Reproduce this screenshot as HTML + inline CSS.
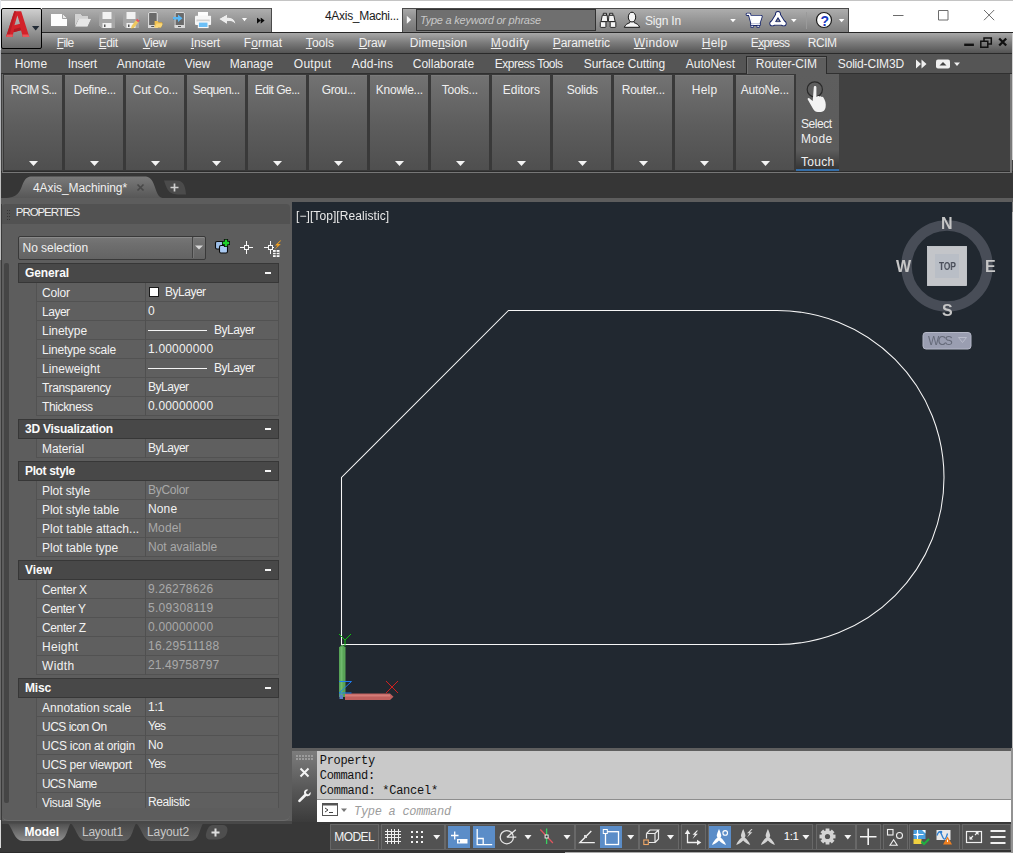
<!DOCTYPE html>
<html lang="en"><head><meta charset="utf-8"><title>4Axis_Machining - AutoCAD</title>
<style>
html,body{margin:0;padding:0}
body{width:1013px;height:853px;position:relative;overflow:hidden;background:#3a3a3a;font-family:'Liberation Sans',sans-serif;font-size:12px;color:#f0f0f0}
.b{position:absolute;box-sizing:border-box}
.t{position:absolute;white-space:pre}
svg{position:absolute;overflow:visible}
u{text-decoration:underline;text-underline-offset:1px}
</style></head><body>
<div class="b" style="left:0px;top:0px;width:1013px;height:33px;background:#ffffff;border-top:1px solid #c4c4c4;"></div>
<div class="b" style="left:42px;top:8px;width:230px;height:24px;background:linear-gradient(#aeaeae,#989898 45%,#7e7e7e);border-top:1px solid #555;border-right:1px solid #4a4a4a;"></div>
<div class="b" style="left:402px;top:8px;width:447px;height:24px;background:linear-gradient(#adadad,#979797 45%,#7e7e7e);border:1px solid #4a4a4a;border-bottom:none;"></div>
<div class="b" style="left:416px;top:9px;width:180px;height:22px;background:#6f6f6f;border:1px solid #323232;"></div>
<div class="b" style="left:403px;top:9px;width:13px;height:22px;background:linear-gradient(#a8a8a8,#8a8a8a 50%,#767676);"></div>
<span class="t" style="left:325.0px;top:8.84px;font-size:12px;line-height:14px;color:#1a1a1a;letter-spacing:-0.302px;">4Axis_Machi...</span>
<span class="t" style="left:420.0px;top:13.69px;font-size:11px;line-height:13px;color:#c8c8c8;letter-spacing:-0.229px;font-style:italic;">Type a keyword or phrase</span>
<span class="t" style="left:645.0px;top:13.84px;font-size:12px;line-height:14px;color:#f0f0f0;letter-spacing:-0.21px;">Sign In</span>
<svg style="left:880px;top:0;width:133px;height:33px" viewBox="0 0 133 33"><path d="M13 15.5h10.5M58.5 10.5h9.5v9.5h-9.5zM104 10l10.2 10.2M114.2 10l-10.2 10.2" fill="none" stroke="#6c6c6c" stroke-width="1"/></svg>
<div class="b" style="left:0px;top:32px;width:1013px;height:22px;background:linear-gradient(#a8a8a8,#7c7c7c 48%,#545454);border-top:1px solid #262626;border-bottom:1px solid #2a2a2a;"></div>
<span class="t" style="left:56.8px;top:35.84px;font-size:12px;line-height:14px;color:#f0f0f0;letter-spacing:-0.686px;"><u>F</u>ile</span>
<span class="t" style="left:98.8px;top:35.84px;font-size:12px;line-height:14px;color:#f0f0f0;letter-spacing:-0.468px;"><u>E</u>dit</span>
<span class="t" style="left:142.8px;top:35.84px;font-size:12px;line-height:14px;color:#f0f0f0;letter-spacing:-0.504px;"><u>V</u>iew</span>
<span class="t" style="left:190.8px;top:35.84px;font-size:12px;line-height:14px;color:#f0f0f0;letter-spacing:-0.146px;"><u>I</u>nsert</span>
<span class="t" style="left:243.8px;top:35.84px;font-size:12px;line-height:14px;color:#f0f0f0;letter-spacing:0.054px;">F<u>o</u>rmat</span>
<span class="t" style="left:305.8px;top:35.84px;font-size:12px;line-height:14px;color:#f0f0f0;letter-spacing:0.071px;"><u>T</u>ools</span>
<span class="t" style="left:358.8px;top:35.84px;font-size:12px;line-height:14px;color:#f0f0f0;letter-spacing:-0.239px;"><u>D</u>raw</span>
<span class="t" style="left:409.8px;top:35.84px;font-size:12px;line-height:14px;color:#f0f0f0;letter-spacing:0.073px;">Dime<u>n</u>sion</span>
<span class="t" style="left:490.8px;top:35.84px;font-size:12px;line-height:14px;color:#f0f0f0;letter-spacing:0.588px;"><u>M</u>odify</span>
<span class="t" style="left:552.8px;top:35.84px;font-size:12px;line-height:14px;color:#f0f0f0;letter-spacing:-0.081px;"><u>P</u>arametric</span>
<span class="t" style="left:633.8px;top:35.84px;font-size:12px;line-height:14px;color:#f0f0f0;letter-spacing:0.323px;"><u>W</u>indow</span>
<span class="t" style="left:701.8px;top:35.84px;font-size:12px;line-height:14px;color:#f0f0f0;letter-spacing:0.204px;"><u>H</u>elp</span>
<span class="t" style="left:750.8px;top:35.84px;font-size:12px;line-height:14px;color:#f0f0f0;letter-spacing:-0.677px;">E<u>x</u>press</span>
<span class="t" style="left:807.8px;top:35.84px;font-size:12px;line-height:14px;color:#f0f0f0;letter-spacing:-0.457px;">RCIM</span>
<svg style="left:960px;top:33px;width:50px;height:20px" viewBox="960 33 50 20"><path d="M964.200 44.800h9.700" stroke="#111" stroke-width="2.400" fill="none"/><path d="M980.800 41.200h7v6h-7zM984 41v-3h7.300v6h-3.300" stroke="#111" stroke-width="1.500" fill="none"/><path d="M999.200 38.500l7 7M1006.200 38.500l-7 7" stroke="#111" stroke-width="2.300" fill="none"/></svg>
<div class="b" style="left:1px;top:8px;width:41px;height:41px;background:linear-gradient(#cfcfcf,#a0a0a0 45%,#6b6b6b);border:1px solid #000;border-radius:2px;"></div>
<svg style="left:1px;top:8px;width:41px;height:41px" viewBox="0 0 41 41"><path d="M5 29 L13.300 3.300 L20.200 3.300 L28.300 29 L21.800 29 L20 22.300 L12.500 24.200 L11.500 29 Z M13.400 17.200 L19 15.800 L16.400 7.500 Z" fill="#d3222a" fill-rule="evenodd"/><path d="M5 29 L13.300 3.300 L15 3.300 L8 29Z" fill="#b81c24"/><path d="M20 22.300 L12.500 24.200 L13.200 21 L19.300 19.500Z" fill="#b01a22"/><path d="M21.800 29 L28.300 29 L27.500 26.500 L21.200 26.500Z" fill="#e8565a"/><path d="M5 29 L11.500 29 L12 26.500 L5.800 26.500Z" fill="#e8565a"/><path d="M31 18h7.400l-3.700 4.600z" fill="#222b36"/></svg>
<div class="b" style="left:0px;top:54px;width:1013px;height:20px;background:#555555;border-bottom:1px solid #303030;"></div>
<div class="b" style="left:746px;top:56px;width:80.5px;height:18.5px;background:#5e5e5e;border:1px solid #2c2c2c;border-bottom:none;box-shadow:inset 1px 1px 0 #727272;"></div>
<span class="t" style="left:14.8px;top:56.84px;font-size:12px;line-height:14px;color:#f0f0f0;letter-spacing:0.095px;">Home</span>
<span class="t" style="left:67.8px;top:56.84px;font-size:12px;line-height:14px;color:#f0f0f0;letter-spacing:-0.143px;">Insert</span>
<span class="t" style="left:116.8px;top:56.84px;font-size:12px;line-height:14px;color:#f0f0f0;letter-spacing:0.036px;">Annotate</span>
<span class="t" style="left:184.8px;top:56.84px;font-size:12px;line-height:14px;color:#f0f0f0;letter-spacing:-0.166px;">View</span>
<span class="t" style="left:229.8px;top:56.84px;font-size:12px;line-height:14px;color:#f0f0f0;letter-spacing:-0.015px;">Manage</span>
<span class="t" style="left:293.8px;top:56.84px;font-size:12px;line-height:14px;color:#f0f0f0;letter-spacing:0.254px;">Output</span>
<span class="t" style="left:351.8px;top:56.84px;font-size:12px;line-height:14px;color:#f0f0f0;letter-spacing:0.102px;">Add-ins</span>
<span class="t" style="left:412.8px;top:56.84px;font-size:12px;line-height:14px;color:#f0f0f0;letter-spacing:-0.008px;">Collaborate</span>
<span class="t" style="left:494.8px;top:56.84px;font-size:12px;line-height:14px;color:#f0f0f0;letter-spacing:-0.515px;">Express Tools</span>
<span class="t" style="left:583.8px;top:56.84px;font-size:12px;line-height:14px;color:#f0f0f0;letter-spacing:-0.101px;">Surface Cutting</span>
<span class="t" style="left:685.8px;top:56.84px;font-size:12px;line-height:14px;color:#f0f0f0;letter-spacing:-0.008px;">AutoNest</span>
<span class="t" style="left:755.8px;top:56.84px;font-size:12px;line-height:14px;color:#f0f0f0;letter-spacing:-0.08px;">Router-CIM</span>
<span class="t" style="left:837.8px;top:56.84px;font-size:12px;line-height:14px;color:#f0f0f0;letter-spacing:-0.172px;">Solid-CIM3D</span>
<svg style="left:910px;top:54px;width:60px;height:20px" viewBox="0 0 60 20"><path d="M6 5.5l5 4.5-5 4.5zM11.5 5.5l5 4.5-5 4.5z" fill="#f0f0f0"/><rect x="26" y="5.5" width="14" height="9" rx="2" fill="#f0f0f0"/><path d="M29.5 11.5h7l-3.5-3.5z" fill="#444"/><path d="M44 8.5h6l-3 3.5z" fill="#f0f0f0"/></svg>
<div class="b" style="left:0px;top:74px;width:1013px;height:98px;background:#414141;border-bottom:1px solid #2c2c2c;"></div>
<div class="b" style="left:2px;top:74px;width:795px;height:97px;background:#393939;"></div>
<div class="b" style="left:1.5px;top:74px;width:1px;height:99px;background:#6a6a6a;"></div>
<div class="b" style="left:4px;top:74.5px;width:58.2px;height:95.3px;background:linear-gradient(#727272,#5e5e5e 50%,#4f4f4f);border-top:1px solid #7a7a7a;"></div>
<span class="t" style="left:10.8px;top:82.84px;font-size:12px;line-height:14px;color:#f0f0f0;letter-spacing:-0.714px;">RCIM S...</span>
<svg style="left:29px;top:161px;width:9px;height:5px" viewBox="0 0 9 5"><path d="M0 0h9l-4.5 5z" fill="#f4f4f4"/></svg>
<div class="b" style="left:65px;top:74.5px;width:58.2px;height:95.3px;background:linear-gradient(#727272,#5e5e5e 50%,#4f4f4f);border-top:1px solid #7a7a7a;"></div>
<span class="t" style="left:73.8px;top:82.84px;font-size:12px;line-height:14px;color:#f0f0f0;letter-spacing:-0.3px;">Define...</span>
<svg style="left:90px;top:161px;width:9px;height:5px" viewBox="0 0 9 5"><path d="M0 0h9l-4.5 5z" fill="#f4f4f4"/></svg>
<div class="b" style="left:126px;top:74.5px;width:58.2px;height:95.3px;background:linear-gradient(#727272,#5e5e5e 50%,#4f4f4f);border-top:1px solid #7a7a7a;"></div>
<span class="t" style="left:132.8px;top:82.84px;font-size:12px;line-height:14px;color:#f0f0f0;letter-spacing:-0.257px;">Cut Co...</span>
<svg style="left:151px;top:161px;width:9px;height:5px" viewBox="0 0 9 5"><path d="M0 0h9l-4.5 5z" fill="#f4f4f4"/></svg>
<div class="b" style="left:187px;top:74.5px;width:58.2px;height:95.3px;background:linear-gradient(#727272,#5e5e5e 50%,#4f4f4f);border-top:1px solid #7a7a7a;"></div>
<span class="t" style="left:192.8px;top:82.84px;font-size:12px;line-height:14px;color:#f0f0f0;letter-spacing:-0.509px;">Sequen...</span>
<svg style="left:212px;top:161px;width:9px;height:5px" viewBox="0 0 9 5"><path d="M0 0h9l-4.5 5z" fill="#f4f4f4"/></svg>
<div class="b" style="left:248px;top:74.5px;width:58.2px;height:95.3px;background:linear-gradient(#727272,#5e5e5e 50%,#4f4f4f);border-top:1px solid #7a7a7a;"></div>
<span class="t" style="left:254.8px;top:82.84px;font-size:12px;line-height:14px;color:#f0f0f0;letter-spacing:-0.526px;">Edit Ge...</span>
<svg style="left:273px;top:161px;width:9px;height:5px" viewBox="0 0 9 5"><path d="M0 0h9l-4.5 5z" fill="#f4f4f4"/></svg>
<div class="b" style="left:309px;top:74.5px;width:58.2px;height:95.3px;background:linear-gradient(#727272,#5e5e5e 50%,#4f4f4f);border-top:1px solid #7a7a7a;"></div>
<span class="t" style="left:321.8px;top:82.84px;font-size:12px;line-height:14px;color:#f0f0f0;letter-spacing:-0.398px;">Grou...</span>
<svg style="left:334px;top:161px;width:9px;height:5px" viewBox="0 0 9 5"><path d="M0 0h9l-4.5 5z" fill="#f4f4f4"/></svg>
<div class="b" style="left:370px;top:74.5px;width:58.2px;height:95.3px;background:linear-gradient(#727272,#5e5e5e 50%,#4f4f4f);border-top:1px solid #7a7a7a;"></div>
<span class="t" style="left:375.8px;top:82.84px;font-size:12px;line-height:14px;color:#f0f0f0;letter-spacing:-0.257px;">Knowle...</span>
<svg style="left:395px;top:161px;width:9px;height:5px" viewBox="0 0 9 5"><path d="M0 0h9l-4.5 5z" fill="#f4f4f4"/></svg>
<div class="b" style="left:431px;top:74.5px;width:58.2px;height:95.3px;background:linear-gradient(#727272,#5e5e5e 50%,#4f4f4f);border-top:1px solid #7a7a7a;"></div>
<span class="t" style="left:441.8px;top:82.84px;font-size:12px;line-height:14px;color:#f0f0f0;letter-spacing:-0.245px;">Tools...</span>
<svg style="left:456px;top:161px;width:9px;height:5px" viewBox="0 0 9 5"><path d="M0 0h9l-4.5 5z" fill="#f4f4f4"/></svg>
<div class="b" style="left:492px;top:74.5px;width:58.2px;height:95.3px;background:linear-gradient(#727272,#5e5e5e 50%,#4f4f4f);border-top:1px solid #7a7a7a;"></div>
<span class="t" style="left:502.8px;top:82.84px;font-size:12px;line-height:14px;color:#f0f0f0;letter-spacing:-0.01px;">Editors</span>
<svg style="left:517px;top:161px;width:9px;height:5px" viewBox="0 0 9 5"><path d="M0 0h9l-4.5 5z" fill="#f4f4f4"/></svg>
<div class="b" style="left:553px;top:74.5px;width:58.2px;height:95.3px;background:linear-gradient(#727272,#5e5e5e 50%,#4f4f4f);border-top:1px solid #7a7a7a;"></div>
<span class="t" style="left:566.8px;top:82.84px;font-size:12px;line-height:14px;color:#f0f0f0;letter-spacing:-0.277px;">Solids</span>
<svg style="left:578px;top:161px;width:9px;height:5px" viewBox="0 0 9 5"><path d="M0 0h9l-4.5 5z" fill="#f4f4f4"/></svg>
<div class="b" style="left:614px;top:74.5px;width:58.2px;height:95.3px;background:linear-gradient(#727272,#5e5e5e 50%,#4f4f4f);border-top:1px solid #7a7a7a;"></div>
<span class="t" style="left:621.8px;top:82.84px;font-size:12px;line-height:14px;color:#f0f0f0;letter-spacing:-0.257px;">Router...</span>
<svg style="left:639px;top:161px;width:9px;height:5px" viewBox="0 0 9 5"><path d="M0 0h9l-4.5 5z" fill="#f4f4f4"/></svg>
<div class="b" style="left:675px;top:74.5px;width:58.2px;height:95.3px;background:linear-gradient(#727272,#5e5e5e 50%,#4f4f4f);border-top:1px solid #7a7a7a;"></div>
<span class="t" style="left:691.8px;top:82.84px;font-size:12px;line-height:14px;color:#f0f0f0;letter-spacing:0.204px;">Help</span>
<svg style="left:700px;top:161px;width:9px;height:5px" viewBox="0 0 9 5"><path d="M0 0h9l-4.5 5z" fill="#f4f4f4"/></svg>
<div class="b" style="left:736px;top:74.5px;width:58.2px;height:95.3px;background:linear-gradient(#727272,#5e5e5e 50%,#4f4f4f);border-top:1px solid #7a7a7a;"></div>
<span class="t" style="left:740.8px;top:82.84px;font-size:12px;line-height:14px;color:#f0f0f0;letter-spacing:-0.216px;">AutoNe...</span>
<svg style="left:761px;top:161px;width:9px;height:5px" viewBox="0 0 9 5"><path d="M0 0h9l-4.5 5z" fill="#f4f4f4"/></svg>
<div class="b" style="left:796.3px;top:74px;width:42.5px;height:96.5px;background:linear-gradient(#5e5e5e 0,#5c5c5c 80%,#363636 100%);border-bottom:2px solid #356ea8;"></div>
<span class="t" style="left:801.0px;top:116.84px;font-size:12px;line-height:14px;color:#f0f0f0;letter-spacing:-0.452px;">Select</span>
<span class="t" style="left:801.0px;top:131.84px;font-size:12px;line-height:14px;color:#f0f0f0;letter-spacing:0.356px;">Mode</span>
<span class="t" style="left:801.0px;top:154.84px;font-size:12px;line-height:14px;color:#f0f0f0;letter-spacing:0.267px;">Touch</span>
<svg style="left:800px;top:76px;width:36px;height:40px" viewBox="800 76 36 40"><circle cx="814.800" cy="89.400" r="7.600" fill="none" stroke="#2a2a2a" stroke-width="1.200"/><g transform="translate(803 81.200) scale(1.080)"><path d="M10 5.500c0-1.400 2.400-1.400 2.400 0v9l1.200-.6c.6-.5 1.400-.2 1.600.4.500-.6 1.600-.5 1.900.3.600-.5 1.600-.2 1.800.6 1.600 2.600 2.700 5.600 2 9.200-.500 2.400-2 4.100-4.200 4.100h-3c-2 0-3.200-1-4.300-2.800l-5-8.700c-.500-1 .4-1.800 1.400-1.300l3.200 2.600z" fill="#f2f2f2"/></g></svg>
<div class="b" style="left:1010px;top:74px;width:1.5px;height:99px;background:#7a7a7a;"></div>
<div class="b" style="left:1.5px;top:172px;width:1010px;height:1px;background:#777;"></div>
<div class="b" style="left:0px;top:173px;width:1013px;height:25px;background:#363636;"></div>
<div class="b" style="left:0px;top:198px;width:1013px;height:6px;background:#5d5d5d;"></div>
<svg style="left:0;top:173px;width:300px;height:30px" viewBox="0 0 300 30"><defs><linearGradient id="tg" x1="0" y1="0" x2="0" y2="1"><stop offset="0" stop-color="#7a7a7a"/><stop offset="1" stop-color="#565656"/></linearGradient></defs><path d="M0 25.500 C14 25.500 19 22 22 13 C25 5 27 3.500 33 3.500 L144 3.500 C150 3.500 152 6 154.500 13 C157.500 22 159 25.500 166 25.500 Z" fill="url(#tg)"/><path d="M164 7.500 L176 7.500 C182 7.500 185 10 186 21.500 L178 21.500 C170 21.500 167 18 164 7.500Z" fill="#4b4b4b"/><path d="M170.500 14.500h8M174.500 10.500v8" stroke="#d0d0d0" stroke-width="1.700"/><path d="M137.500 11.500l6 6M143.500 11.500l-6 6" stroke="#484848" stroke-width="1.700"/></svg>
<span class="t" style="left:33.0px;top:180.84px;font-size:12px;line-height:14px;color:#f0f0f0;letter-spacing:-0.086px;">4Axis_Machining*</span>
<div class="b" style="left:1.5px;top:198px;width:291px;height:623px;background:#5d5d5d;"></div>
<div class="b" style="left:2px;top:204px;width:288px;height:617px;background:#5d5d5d;border-radius:4px 4px 6px 6px;border-bottom:1px solid #6a6a6a;"></div>
<div class="b" style="left:2px;top:204px;width:288px;height:20px;background:#525252;border-radius:4px 4px 0 0;"></div>
<span class="t" style="left:15.8px;top:206.27px;font-size:11.5px;line-height:13.5px;color:#f0f0f0;letter-spacing:-1.069px;">PROPERTIES</span>
<svg style="left:0;top:200px;width:14px;height:24px" viewBox="0 200 14 24"><rect x="7" y="210" width="1" height="1" fill="#363636"/><rect x="7" y="213" width="1" height="1" fill="#363636"/><rect x="7" y="216" width="1" height="1" fill="#363636"/><rect x="7" y="219" width="1" height="1" fill="#363636"/><rect x="9" y="210" width="1" height="1" fill="#363636"/><rect x="9" y="213" width="1" height="1" fill="#363636"/><rect x="9" y="216" width="1" height="1" fill="#363636"/><rect x="9" y="219" width="1" height="1" fill="#363636"/></svg>
<div class="b" style="left:4.2px;top:263px;width:4.4px;height:540px;background:#454545;border-radius:2px;"></div>
<div class="b" style="left:18px;top:236px;width:188px;height:23.5px;background:linear-gradient(#777,#6f6f6f 30%,#636363);border:1px solid #393939;border-radius:2px;box-shadow:inset 0 1px 0 #8a8a8a;"></div>
<div class="b" style="left:192px;top:237px;width:1px;height:21px;background:#444;"></div>
<div class="b" style="left:193px;top:237px;width:1px;height:21px;background:#777;"></div>
<svg style="left:195px;top:245px;width:8px;height:5px" viewBox="0 0 8 5"><path d="M0 0.500h8l-4 4z" fill="#d8d8d8"/></svg>
<span class="t" style="left:22.5px;top:240.84px;font-size:12px;line-height:14px;color:#f0f0f0;letter-spacing:-0.041px;">No selection</span>
<svg style="left:210px;top:236px;width:74px;height:24px" viewBox="210 236 74 24"><rect x="215.500" y="241.500" width="7.500" height="7.500" rx="1.500" fill="#9dbfe8" stroke="#0c0c0c" stroke-width="1.100"/><rect x="219.500" y="245.500" width="8" height="7.500" rx="1.500" fill="#a9c9f1" stroke="#0c0c0c" stroke-width="1.100"/><path d="M222 243h8M226 239v8" stroke="#0c0c0c" stroke-width="4.200"/><path d="M222.800 243h6.400M226 239.800v6.400" stroke="#1fd12a" stroke-width="2.400"/><g shape-rendering="crispEdges" stroke="#f8f8f8" stroke-width="1" fill="none"><path d="M240 247.500h13M246.500 241v13"/><rect x="244.500" y="245.500" width="4" height="4" fill="#595959"/><path d="M264 247.500h10M270.500 241v13"/><rect x="268.500" y="245.500" width="4" height="4" fill="#595959"/></g><path d="M280.200 240.500l-5.200 5h2.700l-3.500 4.400 6.600-5.800h-2.900l3.400-3.600z" fill="#f6a21e"/><rect x="273" y="250" width="6.500" height="7" fill="#f8f8f8"/><path d="M273 252.400h6.500M273 254.700h6.500M276.200 250v7" stroke="#444" stroke-width=".8"/></svg>
<div class="b" style="left:18px;top:263px;width:261px;height:20px;background:#484848;border:1px solid #373737;"></div>
<span class="t" style="left:25.0px;top:265.84px;font-size:12px;line-height:14px;color:#fafafa;letter-spacing:-0.101px;font-weight:bold;">General</span>
<div class="b" style="left:265px;top:272px;width:6px;height:2px;background:#f4f4f4;"></div>
<div class="b" style="left:36px;top:283px;width:243px;height:19px;background:#5f5f5f;border-bottom:1px solid #525252;border-left:1px solid #525252;border-right:1px solid #525252;"></div>
<div class="b" style="left:145px;top:283px;width:1px;height:19px;background:#505050;"></div>
<span class="t" style="left:42.0px;top:285.84px;font-size:12px;line-height:14px;color:#f2f2f2;letter-spacing:-0.147px;">Color</span>
<span class="t" style="left:165.0px;top:284.84px;font-size:12px;line-height:14px;color:#f2f2f2;letter-spacing:-0.489px;">ByLayer</span>
<div class="b" style="left:149px;top:287px;width:10px;height:10px;background:#ffffff;border:1px solid #1a1a1a;"></div>
<div class="b" style="left:36px;top:302px;width:243px;height:19px;background:#5f5f5f;border-bottom:1px solid #525252;border-left:1px solid #525252;border-right:1px solid #525252;"></div>
<div class="b" style="left:145px;top:302px;width:1px;height:19px;background:#505050;"></div>
<span class="t" style="left:42.0px;top:304.84px;font-size:12px;line-height:14px;color:#f2f2f2;letter-spacing:-0.483px;">Layer</span>
<span class="t" style="left:148.0px;top:303.84px;font-size:12px;line-height:14px;color:#f2f2f2;letter-spacing:0px;">0</span>
<div class="b" style="left:36px;top:321px;width:243px;height:19px;background:#5f5f5f;border-bottom:1px solid #525252;border-left:1px solid #525252;border-right:1px solid #525252;"></div>
<div class="b" style="left:145px;top:321px;width:1px;height:19px;background:#505050;"></div>
<span class="t" style="left:42.0px;top:323.84px;font-size:12px;line-height:14px;color:#f2f2f2;letter-spacing:-0.039px;">Linetype</span>
<span class="t" style="left:214.0px;top:322.84px;font-size:12px;line-height:14px;color:#f2f2f2;letter-spacing:-0.489px;">ByLayer</span>
<div class="b" style="left:148px;top:330px;width:59px;height:1px;background:#f4f4f4;"></div>
<div class="b" style="left:36px;top:340px;width:243px;height:19px;background:#5f5f5f;border-bottom:1px solid #525252;border-left:1px solid #525252;border-right:1px solid #525252;"></div>
<div class="b" style="left:145px;top:340px;width:1px;height:19px;background:#505050;"></div>
<span class="t" style="left:42.0px;top:342.84px;font-size:12px;line-height:14px;color:#f2f2f2;letter-spacing:-0.201px;">Linetype scale</span>
<span class="t" style="left:148.0px;top:341.84px;font-size:12px;line-height:14px;color:#f2f2f2;letter-spacing:0.188px;">1.00000000</span>
<div class="b" style="left:36px;top:359px;width:243px;height:19px;background:#5f5f5f;border-bottom:1px solid #525252;border-left:1px solid #525252;border-right:1px solid #525252;"></div>
<div class="b" style="left:145px;top:359px;width:1px;height:19px;background:#505050;"></div>
<span class="t" style="left:42.0px;top:361.84px;font-size:12px;line-height:14px;color:#f2f2f2;letter-spacing:0.081px;">Lineweight</span>
<span class="t" style="left:214.0px;top:360.84px;font-size:12px;line-height:14px;color:#f2f2f2;letter-spacing:-0.489px;">ByLayer</span>
<div class="b" style="left:148px;top:368px;width:59px;height:1px;background:#f4f4f4;"></div>
<div class="b" style="left:36px;top:378px;width:243px;height:19px;background:#5f5f5f;border-bottom:1px solid #525252;border-left:1px solid #525252;border-right:1px solid #525252;"></div>
<div class="b" style="left:145px;top:378px;width:1px;height:19px;background:#505050;"></div>
<span class="t" style="left:42.0px;top:380.84px;font-size:12px;line-height:14px;color:#f2f2f2;letter-spacing:-0.347px;">Transparency</span>
<span class="t" style="left:148.0px;top:379.84px;font-size:12px;line-height:14px;color:#f2f2f2;letter-spacing:-0.489px;">ByLayer</span>
<div class="b" style="left:36px;top:397px;width:243px;height:19px;background:#5f5f5f;border-bottom:1px solid #525252;border-left:1px solid #525252;border-right:1px solid #525252;"></div>
<div class="b" style="left:145px;top:397px;width:1px;height:19px;background:#505050;"></div>
<span class="t" style="left:42.0px;top:399.84px;font-size:12px;line-height:14px;color:#f2f2f2;letter-spacing:-0.366px;">Thickness</span>
<span class="t" style="left:148.0px;top:398.84px;font-size:12px;line-height:14px;color:#f2f2f2;letter-spacing:0.188px;">0.00000000</span>
<div class="b" style="left:18px;top:419px;width:261px;height:20px;background:#484848;border:1px solid #373737;"></div>
<span class="t" style="left:25.0px;top:421.84px;font-size:12px;line-height:14px;color:#fafafa;letter-spacing:-0.248px;font-weight:bold;">3D Visualization</span>
<div class="b" style="left:265px;top:428px;width:6px;height:2px;background:#f4f4f4;"></div>
<div class="b" style="left:36px;top:439px;width:243px;height:19px;background:#5f5f5f;border-bottom:1px solid #525252;border-left:1px solid #525252;border-right:1px solid #525252;"></div>
<div class="b" style="left:145px;top:439px;width:1px;height:19px;background:#505050;"></div>
<span class="t" style="left:42.0px;top:441.84px;font-size:12px;line-height:14px;color:#f2f2f2;letter-spacing:-0.084px;">Material</span>
<span class="t" style="left:148.0px;top:440.84px;font-size:12px;line-height:14px;color:#f2f2f2;letter-spacing:-0.489px;">ByLayer</span>
<div class="b" style="left:18px;top:461px;width:261px;height:20px;background:#484848;border:1px solid #373737;"></div>
<span class="t" style="left:25.0px;top:463.84px;font-size:12px;line-height:14px;color:#fafafa;letter-spacing:-0.362px;font-weight:bold;">Plot style</span>
<div class="b" style="left:265px;top:470px;width:6px;height:2px;background:#f4f4f4;"></div>
<div class="b" style="left:36px;top:481px;width:243px;height:19px;background:#5f5f5f;border-bottom:1px solid #525252;border-left:1px solid #525252;border-right:1px solid #525252;"></div>
<div class="b" style="left:145px;top:481px;width:1px;height:19px;background:#505050;"></div>
<span class="t" style="left:42.0px;top:483.84px;font-size:12px;line-height:14px;color:#f2f2f2;letter-spacing:-0.065px;">Plot style</span>
<span class="t" style="left:148.0px;top:482.84px;font-size:12px;line-height:14px;color:#a9a9a9;letter-spacing:-0.265px;">ByColor</span>
<div class="b" style="left:36px;top:500px;width:243px;height:19px;background:#5f5f5f;border-bottom:1px solid #525252;border-left:1px solid #525252;border-right:1px solid #525252;"></div>
<div class="b" style="left:145px;top:500px;width:1px;height:19px;background:#505050;"></div>
<span class="t" style="left:42.0px;top:502.84px;font-size:12px;line-height:14px;color:#f2f2f2;letter-spacing:-0.063px;">Plot style table</span>
<span class="t" style="left:148.0px;top:501.84px;font-size:12px;line-height:14px;color:#f2f2f2;letter-spacing:0.138px;">None</span>
<div class="b" style="left:36px;top:519px;width:243px;height:19px;background:#5f5f5f;border-bottom:1px solid #525252;border-left:1px solid #525252;border-right:1px solid #525252;"></div>
<div class="b" style="left:145px;top:519px;width:1px;height:19px;background:#505050;"></div>
<span class="t" style="left:42.0px;top:521.84px;font-size:12px;line-height:14px;color:#f2f2f2;letter-spacing:0.055px;">Plot table attach...</span>
<span class="t" style="left:148.0px;top:520.84px;font-size:12px;line-height:14px;color:#a9a9a9;letter-spacing:0.103px;">Model</span>
<div class="b" style="left:36px;top:538px;width:243px;height:19px;background:#5f5f5f;border-bottom:1px solid #525252;border-left:1px solid #525252;border-right:1px solid #525252;"></div>
<div class="b" style="left:145px;top:538px;width:1px;height:19px;background:#505050;"></div>
<span class="t" style="left:42.0px;top:540.84px;font-size:12px;line-height:14px;color:#f2f2f2;letter-spacing:0.003px;">Plot table type</span>
<span class="t" style="left:148.0px;top:539.84px;font-size:12px;line-height:14px;color:#a9a9a9;letter-spacing:-0.023px;">Not available</span>
<div class="b" style="left:18px;top:560px;width:261px;height:20px;background:#484848;border:1px solid #373737;"></div>
<span class="t" style="left:25.0px;top:562.84px;font-size:12px;line-height:14px;color:#fafafa;letter-spacing:-0.014px;font-weight:bold;">View</span>
<div class="b" style="left:265px;top:569px;width:6px;height:2px;background:#f4f4f4;"></div>
<div class="b" style="left:36px;top:580px;width:243px;height:19px;background:#5f5f5f;border-bottom:1px solid #525252;border-left:1px solid #525252;border-right:1px solid #525252;"></div>
<div class="b" style="left:145px;top:580px;width:1px;height:19px;background:#505050;"></div>
<span class="t" style="left:42.0px;top:582.84px;font-size:12px;line-height:14px;color:#f2f2f2;letter-spacing:-0.323px;">Center X</span>
<span class="t" style="left:148.0px;top:581.84px;font-size:12px;line-height:14px;color:#a9a9a9;letter-spacing:0.188px;">9.26278626</span>
<div class="b" style="left:36px;top:599px;width:243px;height:19px;background:#5f5f5f;border-bottom:1px solid #525252;border-left:1px solid #525252;border-right:1px solid #525252;"></div>
<div class="b" style="left:145px;top:599px;width:1px;height:19px;background:#505050;"></div>
<span class="t" style="left:42.0px;top:601.84px;font-size:12px;line-height:14px;color:#f2f2f2;letter-spacing:-0.434px;">Center Y</span>
<span class="t" style="left:148.0px;top:600.84px;font-size:12px;line-height:14px;color:#a9a9a9;letter-spacing:0.287px;">5.09308119</span>
<div class="b" style="left:36px;top:618px;width:243px;height:19px;background:#5f5f5f;border-bottom:1px solid #525252;border-left:1px solid #525252;border-right:1px solid #525252;"></div>
<div class="b" style="left:145px;top:618px;width:1px;height:19px;background:#505050;"></div>
<span class="t" style="left:42.0px;top:620.84px;font-size:12px;line-height:14px;color:#f2f2f2;letter-spacing:-0.37px;">Center Z</span>
<span class="t" style="left:148.0px;top:619.84px;font-size:12px;line-height:14px;color:#a9a9a9;letter-spacing:0.188px;">0.00000000</span>
<div class="b" style="left:36px;top:637px;width:243px;height:19px;background:#5f5f5f;border-bottom:1px solid #525252;border-left:1px solid #525252;border-right:1px solid #525252;"></div>
<div class="b" style="left:145px;top:637px;width:1px;height:19px;background:#505050;"></div>
<span class="t" style="left:42.0px;top:639.84px;font-size:12px;line-height:14px;color:#f2f2f2;letter-spacing:0.283px;">Height</span>
<span class="t" style="left:148.0px;top:638.84px;font-size:12px;line-height:14px;color:#a9a9a9;letter-spacing:0.28px;">16.29511188</span>
<div class="b" style="left:36px;top:656px;width:243px;height:19px;background:#5f5f5f;border-bottom:1px solid #525252;border-left:1px solid #525252;border-right:1px solid #525252;"></div>
<div class="b" style="left:145px;top:656px;width:1px;height:19px;background:#505050;"></div>
<span class="t" style="left:42.0px;top:658.84px;font-size:12px;line-height:14px;color:#f2f2f2;letter-spacing:0.353px;">Width</span>
<span class="t" style="left:148.0px;top:657.84px;font-size:12px;line-height:14px;color:#a9a9a9;letter-spacing:0.102px;">21.49758797</span>
<div class="b" style="left:18px;top:678px;width:261px;height:20px;background:#484848;border:1px solid #373737;"></div>
<span class="t" style="left:25.0px;top:680.84px;font-size:12px;line-height:14px;color:#fafafa;letter-spacing:-0.196px;font-weight:bold;">Misc</span>
<div class="b" style="left:265px;top:687px;width:6px;height:2px;background:#f4f4f4;"></div>
<div class="b" style="left:36px;top:698px;width:243px;height:19px;background:#5f5f5f;border-bottom:1px solid #525252;border-left:1px solid #525252;border-right:1px solid #525252;"></div>
<div class="b" style="left:145px;top:698px;width:1px;height:19px;background:#505050;"></div>
<span class="t" style="left:42.0px;top:700.84px;font-size:12px;line-height:14px;color:#f2f2f2;letter-spacing:0.024px;">Annotation scale</span>
<span class="t" style="left:148.0px;top:699.84px;font-size:12px;line-height:14px;color:#f2f2f2;letter-spacing:-0.294px;">1:1</span>
<div class="b" style="left:36px;top:717px;width:243px;height:19px;background:#5f5f5f;border-bottom:1px solid #525252;border-left:1px solid #525252;border-right:1px solid #525252;"></div>
<div class="b" style="left:145px;top:717px;width:1px;height:19px;background:#505050;"></div>
<span class="t" style="left:42.0px;top:719.84px;font-size:12px;line-height:14px;color:#f2f2f2;letter-spacing:-0.493px;">UCS icon On</span>
<span class="t" style="left:148.0px;top:718.84px;font-size:12px;line-height:14px;color:#f2f2f2;letter-spacing:-0.739px;">Yes</span>
<div class="b" style="left:36px;top:736px;width:243px;height:19px;background:#5f5f5f;border-bottom:1px solid #525252;border-left:1px solid #525252;border-right:1px solid #525252;"></div>
<div class="b" style="left:145px;top:736px;width:1px;height:19px;background:#505050;"></div>
<span class="t" style="left:42.0px;top:738.84px;font-size:12px;line-height:14px;color:#f2f2f2;letter-spacing:-0.213px;">UCS icon at origin</span>
<span class="t" style="left:148.0px;top:737.84px;font-size:12px;line-height:14px;color:#f2f2f2;letter-spacing:-0.244px;">No</span>
<div class="b" style="left:36px;top:755px;width:243px;height:19px;background:#5f5f5f;border-bottom:1px solid #525252;border-left:1px solid #525252;border-right:1px solid #525252;"></div>
<div class="b" style="left:145px;top:755px;width:1px;height:19px;background:#505050;"></div>
<span class="t" style="left:42.0px;top:757.84px;font-size:12px;line-height:14px;color:#f2f2f2;letter-spacing:-0.262px;">UCS per viewport</span>
<span class="t" style="left:148.0px;top:756.84px;font-size:12px;line-height:14px;color:#f2f2f2;letter-spacing:-0.739px;">Yes</span>
<div class="b" style="left:36px;top:774px;width:243px;height:19px;background:#5f5f5f;border-bottom:1px solid #525252;border-left:1px solid #525252;border-right:1px solid #525252;"></div>
<div class="b" style="left:145px;top:774px;width:1px;height:19px;background:#505050;"></div>
<span class="t" style="left:42.0px;top:776.84px;font-size:12px;line-height:14px;color:#f2f2f2;letter-spacing:-0.798px;">UCS Name</span>
<div class="b" style="left:36px;top:793px;width:243px;height:15px;background:#5f5f5f;border-left:1px solid #525252;border-right:1px solid #525252;"></div>
<div class="b" style="left:145px;top:793px;width:1px;height:15px;background:#505050;"></div>
<span class="t" style="left:42.0px;top:795.84px;font-size:12px;line-height:14px;color:#f2f2f2;letter-spacing:-0.308px;height:14px;overflow:hidden;">Visual Style</span>
<span class="t" style="left:148.0px;top:794.84px;font-size:12px;line-height:14px;color:#f2f2f2;letter-spacing:-0.407px;height:14px;overflow:hidden;">Realistic</span>
<div class="b" style="left:292px;top:202px;width:720px;height:546px;background:#212830;"></div>
<div class="b" style="left:1012px;top:202px;width:1px;height:546px;background:#7a7a7a;"></div>
<span class="t" style="left:296.0px;top:208.84px;font-size:12px;line-height:14px;color:#e8e8e8;letter-spacing:0.077px;will-change:transform;">[−][Top][Realistic]</span>
<svg style="left:292px;top:202px;width:720px;height:546px" viewBox="292 202 720 546">
<path d="M341.500 644.500 L341.500 477.500 L508.500 310.500 L777 310.500 A167 167 0 0 1 777 644.500 Z" fill="none" stroke="#f6f6f6" stroke-width="1.050"/>
<circle cx="947" cy="266" r="40.500" fill="none" stroke="#484d57" stroke-width="10.500"/>
<rect x="927.500" y="246.500" width="39" height="39" fill="#c3c5c9" stroke="#d2d4d8" stroke-width=".8"/>
<rect x="935" y="254" width="24" height="24" fill="#b9bec6"/>
<rect x="923" y="332.500" width="48" height="16.500" rx="3" fill="#9a9eb1" stroke="#b4b7c6" stroke-width="1"/>
<path d="M958.500 337.500h8l-4 5z" fill="none" stroke="#b9bccb" stroke-width="1"/>
<g>
<rect x="339" y="647" width="6.500" height="50" fill="#58a457"/><path d="M339 647.500l3.200-3 3.300 3z" fill="#58a457"/>
<rect x="340.500" y="647" width="2" height="50" fill="#6fb96d"/>
<rect x="345" y="693.500" width="45" height="6.500" fill="#c0605e"/><path d="M390 693.500l3.500 3.200-3.500 3.300z" fill="#c0605e"/>
<rect x="345" y="694.500" width="45" height="2" fill="#d47c78"/>
<rect x="339.500" y="694.500" width="3.500" height="4.500" fill="#5a7fc4"/>
<path d="M339 634l6 6 6-6M345 640v6" fill="none" stroke="#10c010" stroke-width="1"/>
<path d="M339 681.500h12.500l-12.500 11.500h12.500" fill="none" stroke="#1e7cf0" stroke-width="1"/>
<path d="M386 681l12 12M398 681l-12 12" fill="none" stroke="#d02020" stroke-width="1"/>
</g>
</svg>
<span class="t" style="left:941.3px;top:214.76px;font-size:16px;line-height:18px;color:#c6c6c6;letter-spacing:0px;font-weight:bold;will-change:transform;">N</span>
<span class="t" style="left:941.6px;top:301.76px;font-size:16px;line-height:18px;color:#c6c6c6;letter-spacing:0px;font-weight:bold;will-change:transform;">S</span>
<span class="t" style="left:896.4px;top:257.76px;font-size:16px;line-height:18px;color:#c6c6c6;letter-spacing:0px;font-weight:bold;will-change:transform;">W</span>
<span class="t" style="left:985.4px;top:257.76px;font-size:16px;line-height:18px;color:#c6c6c6;letter-spacing:0px;font-weight:bold;will-change:transform;">E</span>
<span class="t" style="left:939.0px;top:259.57px;font-size:11.5px;line-height:13.5px;color:#4a4f5a;letter-spacing:0px;font-weight:bold;transform:scaleX(0.72);transform-origin:0 0;will-change:transform;">TOP</span>
<span class="t" style="left:927.5px;top:333.64px;font-size:12px;line-height:14px;color:#666b7a;letter-spacing:-1.6px;will-change:transform;">WCS</span>
<div class="b" style="left:292px;top:748px;width:721px;height:3px;background:#5e5e5e;"></div>
<div class="b" style="left:292.5px;top:751px;width:720px;height:71.5px;background:#c9c9c9;"></div>
<div class="b" style="left:292px;top:750.5px;width:24.5px;height:71.5px;background:linear-gradient(#7c7c7c,#5a5a5a 50%,#3b3b3b);"></div>
<div class="b" style="left:316.5px;top:799.5px;width:695.5px;height:22.5px;background:#ffffff;"></div>
<div class="b" style="left:316.5px;top:799px;width:695px;height:1px;background:#8e8e8e;"></div>
<span class="t" style="left:319.8px;top:753.80px;font-size:12px;line-height:14px;color:#111;letter-spacing:-0.33px;font-family:'Liberation Mono',monospace;">Property</span>
<span class="t" style="left:319.8px;top:768.80px;font-size:12px;line-height:14px;color:#111;letter-spacing:-0.33px;font-family:'Liberation Mono',monospace;">Command:</span>
<span class="t" style="left:319.8px;top:783.80px;font-size:12px;line-height:14px;color:#111;letter-spacing:-0.258px;font-family:'Liberation Mono',monospace;">Command: *Cancel*</span>
<span class="t" style="left:354.0px;top:804.80px;font-size:12px;line-height:14px;color:#9c9c9c;letter-spacing:-0.287px;font-family:'Liberation Mono',monospace;font-style:italic;">Type a command</span>
<svg style="left:293px;top:751px;width:60px;height:72px" viewBox="0 0 60 72"><rect x="3" y="4" width="2" height="2" fill="#9c9c9c"/><rect x="3" y="7" width="2" height="2" fill="#9c9c9c"/><rect x="6" y="4" width="2" height="2" fill="#9c9c9c"/><rect x="6" y="7" width="2" height="2" fill="#9c9c9c"/><rect x="9" y="4" width="2" height="2" fill="#9c9c9c"/><rect x="9" y="7" width="2" height="2" fill="#9c9c9c"/><rect x="12" y="4" width="2" height="2" fill="#9c9c9c"/><rect x="12" y="7" width="2" height="2" fill="#9c9c9c"/><rect x="15" y="4" width="2" height="2" fill="#9c9c9c"/><rect x="15" y="7" width="2" height="2" fill="#9c9c9c"/><rect x="18" y="4" width="2" height="2" fill="#9c9c9c"/><rect x="18" y="7" width="2" height="2" fill="#9c9c9c"/>
<path d="M7.500 17.500l8 8M15.500 17.500l-8 8" stroke="#f4f4f4" stroke-width="2"/>
<g transform="translate(0.800 9.500) scale(0.780)"><path d="M6 50.500l7.500-7.500c-1.500-3.500 1.500-6.500 5-5.500l-3 3 .8 2.200 2.200.8 3-3c1 3.500-2 6.500-5.500 5l-7.500 7.500c-1.500 1.500-4-1-2.500-2.500z" fill="#f4f4f4"/></g>
<rect x="29.500" y="52.500" width="15" height="12" fill="#fff" stroke="#555" stroke-width="1"/><path d="M29 53.500h16" stroke="#555" stroke-width="2"/>
<path d="M32 57l3 2-3 2M36 61.500h4" stroke="#444" stroke-width="1" fill="none"/>
<path d="M48 57.500h6l-3 3.500z" fill="#777"/>
</svg>
<div class="b" style="left:0px;top:822px;width:1013px;height:31px;background:#383838;"></div>
<div class="b" style="left:0px;top:852px;width:565px;height:1px;background:#2c2c2c;"></div>
<div class="b" style="left:2px;top:821px;width:290px;height:2.5px;background:#484848;"></div>
<svg style="left:0;top:820px;width:300px;height:33px" viewBox="0 820 300 33"><defs><linearGradient id="lg" x1="0" y1="0" x2="0" y2="1"><stop offset="0" stop-color="#505050"/><stop offset="1" stop-color="#8e8e8e"/></linearGradient><linearGradient id="lg2" x1="0" y1="0" x2="0" y2="1"><stop offset="0" stop-color="#4a4a4a"/><stop offset="1" stop-color="#606060"/></linearGradient></defs>
<path d="M8 823.500 L70.500 823.500 C67 829 66.500 841 58 841 L23 841 C14.500 841 13 829 8 823.500Z" fill="url(#lg)"/>
<path d="M71 823.500 L136 823.500 C132.500 829 132 841 123.500 841 L86 841 C78 841 76.500 829 71 823.500Z" fill="url(#lg2)"/>
<path d="M136.500 823.500 L203 823.500 C199.500 829 199 841 190.500 841 L151.500 841 C143.500 841 142 829 136.500 823.500Z" fill="url(#lg2)"/>
<path d="M213 825 L222 825 C226 825 227.500 827 227.500 830 C227 836 223 839.500 217 839.500 L210 839.500 C206.500 839.500 205.500 837 206 834 C207 829 209 825 213 825Z" fill="#4e4e4e"/>
<path d="M211.500 832.500h8M215.500 828.500v8" stroke="#ddd" stroke-width="2"/>
</svg>
<span class="t" style="left:24.5px;top:824.84px;font-size:12px;line-height:14px;color:#ffffff;letter-spacing:-0.018px;font-weight:bold;">Model</span>
<span class="t" style="left:82.0px;top:824.84px;font-size:12px;line-height:14px;color:#c8c8c8;letter-spacing:-0.267px;">Layout1</span>
<span class="t" style="left:147.0px;top:824.84px;font-size:12px;line-height:14px;color:#c8c8c8;letter-spacing:-0.101px;">Layout2</span>
<div class="b" style="left:329.5px;top:822.5px;width:683.5px;height:27.5px;background:#4e4e4e;border-top:1px solid #3a3a3a;"></div>
<div class="b" style="left:330px;top:824px;width:49px;height:26px;background:#525252;border:1px solid #686868;"></div>
<span class="t" style="left:334.3px;top:829.84px;font-size:12px;line-height:14px;color:#f4f4f4;letter-spacing:-0.572px;">MODEL</span>
<div class="b" style="left:380.5px;top:824px;width:64.0px;height:26px;background:#525252;border:1px solid #686868;"></div>
<div class="b" style="left:445px;top:824px;width:130px;height:26px;background:#525252;border:1px solid #686868;"></div>
<div class="b" style="left:575px;top:824px;width:64px;height:26px;background:#525252;border:1px solid #686868;"></div>
<div class="b" style="left:639px;top:824px;width:40px;height:26px;background:#525252;border:1px solid #686868;"></div>
<div class="b" style="left:681px;top:824px;width:24.5px;height:26px;background:#525252;border:1px solid #686868;"></div>
<div class="b" style="left:708px;top:824px;width:105px;height:26px;background:#525252;border:1px solid #686868;"></div>
<div class="b" style="left:815.5px;top:824px;width:40.5px;height:26px;background:#525252;border:1px solid #686868;"></div>
<div class="b" style="left:856px;top:824px;width:25px;height:26px;background:#525252;border:1px solid #686868;"></div>
<div class="b" style="left:882.5px;top:824px;width:25.0px;height:26px;background:#525252;border:1px solid #686868;"></div>
<div class="b" style="left:909px;top:824px;width:50.5px;height:26px;background:#525252;border:1px solid #686868;"></div>
<div class="b" style="left:961.5px;top:824px;width:49.0px;height:26px;background:#525252;border:1px solid #686868;"></div>
<div class="b" style="left:448px;top:826px;width:22.2px;height:22px;background:#5b8dc8;"></div>
<div class="b" style="left:473px;top:826px;width:22.2px;height:22px;background:#5b8dc8;"></div>
<div class="b" style="left:600px;top:826px;width:22.2px;height:22px;background:#5b8dc8;"></div>
<div class="b" style="left:709px;top:826px;width:22.2px;height:22px;background:#5b8dc8;"></div>
<span class="t" style="left:783.8px;top:830.27px;font-size:11.5px;line-height:13.5px;color:#ffffff;letter-spacing:0px;letter-spacing:-0.5px;">1:1</span>
<svg style="left:326px;top:823px;width:687px;height:30px" viewBox="326 823 687 30"><path shape-rendering="crispEdges" d="M387.500 829v15M391.500 829v15M394.500 829v15M398.500 829v15M385 831.500h16M385 834.500h16M385 837.500h16M385 841.500h16" stroke="#f0f0f0" stroke-width="1" fill="none"/><rect x="411" y="831" width="2" height="2" fill="#f4f4f4"/><rect x="411" y="836" width="2" height="2" fill="#f4f4f4"/><rect x="411" y="841" width="2" height="2" fill="#f4f4f4"/><rect x="416" y="831" width="2" height="2" fill="#f4f4f4"/><rect x="416" y="836" width="2" height="2" fill="#f4f4f4"/><rect x="416" y="841" width="2" height="2" fill="#f4f4f4"/><rect x="421" y="831" width="2" height="2" fill="#f4f4f4"/><rect x="421" y="836" width="2" height="2" fill="#f4f4f4"/><rect x="421" y="841" width="2" height="2" fill="#f4f4f4"/><path d="M433.2 835h7l-3.5 4.5z" fill="#f4f4f4"/><path d="M451 835.500h7.500M454.700 831.500v8" stroke="#fff" stroke-width="1.300"/><rect x="457" y="839" width="10.500" height="4.500" fill="#fff"/><rect x="458.500" y="840.300" width="1.500" height="2" fill="#5b8dc8"/><path d="M477.200 829v15.600h15M477.200 838.500h6v6" stroke="#fff" stroke-width="1.300" fill="none"/><circle cx="506.800" cy="837.200" r="6.600" fill="none" stroke="#e6e6e6" stroke-width="1.300"/><path d="M506.800 837.200h9.500M506.800 837.200l9-7.500" stroke="#e6e6e6" stroke-width="1.300"/><path d="M524.5 835h7l-3.5 4.5z" fill="#f4f4f4"/><path d="M540.300 829.500l12.600 13.500" stroke="#e0565e" stroke-width="1.200"/><path d="M546.600 828.500v15.500" stroke="#38d060" stroke-width="1.300"/><rect x="545.100" y="835" width="3" height="3" fill="#333" stroke="#fff" stroke-width=".9"/><path d="M563.5 835h7l-3.5 4.5z" fill="#f4f4f4"/><path d="M594.800 842.700h-15l11.500-11.700" stroke="#f0f0f0" stroke-width="1.300" fill="none"/><rect x="584" y="835" width="3" height="3" fill="#ddd"/><rect x="605.500" y="831.700" width="13" height="12.800" fill="none" stroke="#fff" stroke-width="1.300"/><rect x="603.300" y="829.500" width="4" height="4" fill="#5b8dc8" stroke="#fff" stroke-width="1"/><path d="M627.2 835h7l-3.5 4.5z" fill="#f4f4f4"/><path d="M646.500 833.500h8.500v9h-6M646.500 833.500v5M646.500 833.500l3.500-3.500h8.500l-3.500 3.500M658.500 830v9l-3.500 3.500" stroke="#e8e8e8" stroke-width="1.200" fill="none"/><rect x="643.800" y="840" width="4.500" height="4.500" fill="#525252" stroke="#f0a868" stroke-width="1.100"/><path d="M667 835h7l-3.5 4.5z" fill="#f4f4f4"/><path d="M687.5 832v10.5h10.5" stroke="#f0f0f0" stroke-width="1.3" fill="none"/><path d="M684.700 834l2.800-4.500 2.800 4.500zM697 839.700l4.300 2.800-4.300 2.800z" fill="#f0f0f0"/><path d="M696.800 830.500l-4.300 4.200h2.400l-2.400 4.300 5.400-5.300h-2.500l2.600-3.200z" fill="#f0f0f0"/><path d="M719 829 C720 831.5 721.3 834 721.3 836 L720.5 837.5 C723 839.5 725 842 726 845 C723.5 844 721 842.5 719 840.5 C717 842.5 714.5 844 712 845 C713 842 715 839.5 717.5 837.5 L716.7 836 C716.7 834 718 831.5 719 829Z" fill="#fff"/><circle cx="725.2" cy="832.9" r="2.3" fill="none" stroke="#fff" stroke-width="1.1"/><path d="M743.2 829 C744.2 831.5 745.5 834 745.5 836 L744.7 837.5 C747.2 839.5 749.2 842 750.2 845 C747.7 844 745.2 842.5 743.2 840.5 C741.2 842.5 738.7 844 736.2 845 C737.2 842 739.2 839.5 741.7 837.5 L740.9000000000001 836 C740.9000000000001 834 742.2 831.5 743.2 829Z" fill="#d4d4d4"/><path d="M751.3 829l-4.300 4.200h2.400l-2.400 4.300 5.400-5.300h-2.500l2.600-3.200z" fill="#d4d4d4"/><path d="M767.9 829 C768.9 831.5 770.1999999999999 834 770.1999999999999 836 L769.4 837.5 C771.9 839.5 773.9 842 774.9 845 C772.4 844 769.9 842.5 767.9 840.5 C765.9 842.5 763.4 844 760.9 845 C761.9 842 763.9 839.5 766.4 837.5 L765.6 836 C765.6 834 766.9 831.5 767.9 829Z" fill="#d4d4d4"/><path d="M802.4 835h7l-3.5 4.5z" fill="#f4f4f4"/><g transform="translate(827.500 836.500)"><g fill="#d4d4d4"><rect x="-1.900" y="-8" width="3.800" height="16" transform="rotate(0)"/><rect x="-1.900" y="-8" width="3.800" height="16" transform="rotate(45)"/><rect x="-1.900" y="-8" width="3.800" height="16" transform="rotate(90)"/><rect x="-1.900" y="-8" width="3.800" height="16" transform="rotate(135)"/><circle r="6.200"/></g><circle r="2.600" fill="#525252"/></g><path d="M844.3 835h7l-3.5 4.5z" fill="#f4f4f4"/><path d="M860 836.800h16.500M868.200 828.500v16.500" stroke="#f4f4f4" stroke-width="1.600"/><rect x="887.500" y="829.500" width="5.500" height="5.500" fill="none" stroke="#f0f0f0" stroke-width="1.100"/><circle cx="899.500" cy="835.500" r="3" fill="none" stroke="#f0f0f0" stroke-width="1.100"/><path d="M890 845.200l3.600-5.500 3.600 5.500z" fill="none" stroke="#f0f0f0" stroke-width="1.100"/><rect x="913.500" y="830" width="12" height="9" fill="#49a0e0"/><rect x="913.500" y="839" width="8" height="5" fill="#f0d040"/><path d="M913.500 834.500h10M917.500 830v9" stroke="#fff" stroke-width="1.100"/><circle cx="917.500" cy="834.500" r="1.500" fill="#fff"/><path d="M922 830h3.500v3.500z" fill="#fff"/><path d="M921.500 841.500l2.500 2.500 5-5" stroke="#20b040" stroke-width="2" fill="none"/><rect x="936.500" y="830" width="14" height="10" fill="#e8e8e8"/><path d="M937 835.500c2-5 3-5 5 0s3.500 5 5.500-2" stroke="#3080d0" stroke-width="1.300" fill="none"/><circle cx="941" cy="832" r="1.300" fill="#3080d0"/><path d="M947.500 836.500l4.500 8h-9z" fill="#f08020"/><path d="M947.500 839.500v2.500" stroke="#fff" stroke-width="1"/><rect x="966.500" y="831.500" width="15" height="11" fill="none" stroke="#f0f0f0" stroke-width="1.200"/><path d="M970 839l3-3M975 835l3-3" stroke="#f0f0f0" stroke-width="1.100"/><path d="M969.500 836v3.500h3.500zM975 831.800h3.500v3.500z" fill="#f0f0f0"/><path d="M990.500 831h15M990.500 837h15M990.500 843h15" stroke="#f0f0f0" stroke-width="2"/></svg>
<div class="b" style="left:329.5px;top:849.3px;width:683.5px;height:1px;background:#666;"></div>
<div class="b" style="left:329.5px;top:850.3px;width:683.5px;height:3px;background:#333;"></div>
<div class="b" style="left:565px;top:852px;width:448px;height:1px;background:#a8a8a8;"></div>
<svg style="left:42px;top:8px;width:232px;height:25px;filter:drop-shadow(0 0 .6px rgba(40,40,40,.75))" viewBox="42 8 232 25"><path d="M51 14h11.300v4.700h4.700v7.300h-16z" fill="#fdfdfd"/><path d="M63 14.300l3.800 3.800h-3.800z" fill="#ececec"/><path d="M74.800 26.800v-12.800h6.200l1.500 2h5.700v3h-9.500z" fill="#d2d2d2"/><path d="M75 26.800l3.800-8h12.500l-3.800 8z" fill="#e6e6e6"/><path d="M99 12h16v16h-14l-2-2z" fill="#a6a6a6"/><rect x="102.500" y="12" width="9" height="7" fill="#f2f2f2"/><rect x="102.500" y="23" width="9" height="5" fill="#f2f2f2"/><rect x="104" y="24.500" width="1.500" height="2.500" fill="#555"/><path d="M123 12h16v16h-14l-2-2z" fill="#a6a6a6"/><rect x="126.500" y="12" width="9" height="7" fill="#f2f2f2"/><rect x="126.500" y="23" width="9" height="5" fill="#f2f2f2"/><rect x="128" y="24.500" width="1.500" height="2.500" fill="#555"/><g transform="translate(135.500 23.500) scale(.8) translate(-135.500 -23.500)"><path d="M130.500 26.500l5.500-7 3 2.500-5.500 7-3.500 1z" fill="#f0c860"/><path d="M136 19.500l1.500-2 3 2.500-1.500 2z" fill="#f0505a"/></g><rect x="148.500" y="12.500" width="8.800" height="15" rx="1" fill="#6a6a6a" stroke="#d8d8d8" stroke-width="1.200"/><rect x="148" y="25" width="9.800" height="3" fill="#d8d8d8"/><rect x="151.200" y="26" width="3" height="1" fill="#555"/><path d="M154.600 27.800v-6.800h3l1 1.200h3.600v1.500" fill="#f0c050"/><path d="M154.600 27.800l2-4.300h6.500l-2 4.300z" fill="#fad676"/><rect x="175" y="12.500" width="9.500" height="15" rx="1" fill="#6a6a6a" stroke="#d8d8d8" stroke-width="1.200"/><rect x="174.500" y="25" width="10.500" height="3" fill="#d8d8d8"/><rect x="178" y="26" width="3" height="1" fill="#555"/><path d="M173 17h5v-2.500l4.500 3.700-4.500 3.700v-2.500h-5z" fill="#5ab8f6"/><rect x="198" y="12" width="10" height="5" fill="#fdfdfd"/><rect x="195" y="15.500" width="16.200" height="9.500" rx=".8" fill="#f6f6f6"/><rect x="196.500" y="19.500" width="13.200" height="2" fill="#d2d2d2"/><rect x="198.300" y="22" width="9.800" height="5.600" fill="#6cc0f8" stroke="#f8f8f8" stroke-width="1.200"/><path d="M219 19l8-4.500v3c5 0 8 2 8.500 6.500-2-2.500-4.500-3-8.500-3v3z" fill="#ececec"/><path d="M241.800 18h5.400l-2.700 3.400z" fill="#fafafa"/><path d="M257 17.800l3.700 2.800-3.700 2.800zM260.800 17.800l3.700 2.800-3.700 2.800z" fill="#0a0a0a"/></svg>
<svg style="left:402px;top:8px;width:447px;height:25px" viewBox="402 8 447 25"><path d="M406.800 15.800l4.400 4-4.400 4z" fill="#f6f6f6"/><g fill="#f4f4f4" stroke="#161616" stroke-width=".9" stroke-linejoin="round"><rect x="607" y="16.500" width="2.200" height="5.500" fill="#cfcfcf" stroke="none"/><rect x="603.300" y="13.300" width="3.200" height="2"/><path d="M602.300 15.300h4.900l.5 6.300h-6.700z"/><rect x="600.300" y="21.700" width="5.600" height="5.700" rx=".8"/><rect x="609.600" y="13.300" width="3.200" height="2"/><path d="M608.900 15.300h4.900l1.300 6.300h-6.700z"/><rect x="610.200" y="21.700" width="5.600" height="5.700" rx=".8"/></g><g fill="#f6f6f6" stroke="#141414" stroke-width="1" stroke-linejoin="round"><path d="M624.300 27.300c1.200-2.800 3.200-3.800 5.400-4.500l.4-1.500h3.800l.4 1.500c2.200.7 4.200 1.700 5.400 4.500z"/><ellipse cx="632" cy="17.100" rx="3.700" ry="4.900"/></g><path d="M730.200 19h5.600l-2.800 3.200z" fill="#fff"/><g fill="none" stroke-linejoin="round" stroke-linecap="round"><path d="M747.200 14.300h2.300l2.300 8.300h7.300l2-6h-10.800M751.500 24.300h8" stroke="#16246a" stroke-width="3.200"/><path d="M750.500 16.600h10.600l-1.900 5.800h-7.200z" fill="#fff" stroke="none"/><path d="M747.200 14.300h2.300l2.300 8.300h7.300l2-6h-10.800M751.500 24.300h8" stroke="#fff" stroke-width="1.500"/></g><rect x="751" y="25.300" width="2.200" height="2.200" fill="#fff" stroke="#16246a" stroke-width=".8"/><rect x="757" y="25.300" width="2.200" height="2.200" fill="#fff" stroke="#16246a" stroke-width=".8"/><g fill="none" stroke-linejoin="round"><path d="M778 14.200l-5.600 9h11.200z" stroke="#16246a" stroke-width="4.800"/><g fill="#16246a" stroke="none"><circle cx="778" cy="14" r="2.900"/><circle cx="772.300" cy="23.400" r="2.900"/><circle cx="783.700" cy="23.400" r="2.900"/></g><path d="M778 14.200l-5.600 9h11.200z" stroke="#fff" stroke-width="2.900"/><g fill="#fff" stroke="none"><circle cx="778" cy="14" r="2"/><circle cx="772.300" cy="23.400" r="2"/><circle cx="783.700" cy="23.400" r="2"/></g><path d="M778 18.400l-2.100 3.300h4.200z" fill="#8e8e8e" stroke="#16246a" stroke-width=".6"/></g><path d="M791 19h5.600l-2.800 3.200z" fill="#fff"/><path d="M806.500 12v17" stroke="#9a9a9a" stroke-width="1"/><circle cx="824" cy="20" r="7.500" fill="#fff" stroke="#1a1a1a" stroke-width="1.200"/><path d="M838.800 19h5.600l-2.800 3.200z" fill="#fff"/></svg>
<span class="t" style="left:820.6px;top:12.75px;font-size:14px;line-height:16px;color:#1838c0;letter-spacing:0px;font-weight:bold;">?</span>
<div class="b" style="left:0px;top:0px;width:1.2px;height:50px;background:#e4e7ec;"></div>
<div class="b" style="left:0px;top:50px;width:1.2px;height:110px;background:#b4b6ba;"></div>
<div class="b" style="left:0px;top:160px;width:1.2px;height:100px;background:#c0c0c0;"></div>
<div class="b" style="left:0px;top:260px;width:1.2px;height:560px;background:#6a6a6a;"></div>
<div class="b" style="left:0px;top:820px;width:1.2px;height:28px;background:#d8d8d8;"></div>
<div class="b" style="left:1011.5px;top:33px;width:1.5px;height:127px;background:#cfcfcf;"></div>
<div class="b" style="left:1011.5px;top:212px;width:1.5px;height:536px;background:#b8b8b8;"></div>
<div class="b" style="left:1011px;top:748px;width:2px;height:105px;background:#929292;"></div>
</body></html>
